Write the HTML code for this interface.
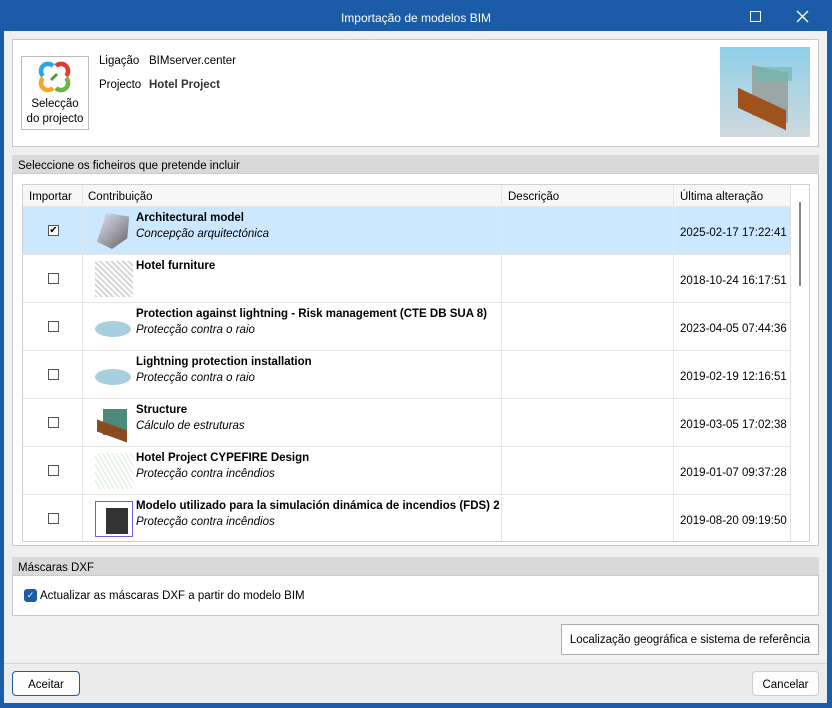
<!DOCTYPE html>
<html><head><meta charset="utf-8"><style>
*{box-sizing:border-box;margin:0;padding:0}
body{width:832px;height:708px;position:relative;overflow:hidden;background:#1a5ca8;font-family:"Liberation Sans",sans-serif;font-size:11.5px;color:#000}
.abs{position:absolute}
#win{left:4px;top:31px;width:823px;height:672px;background:#f0f0f0}
.title{left:0;top:0;width:832px;height:31px;color:#fff;font-size:12px;text-align:center;line-height:37px}
.panel{background:#fff;border:1px solid #c8c8c8}
.hdr{background:#d9d9d9;height:19px;line-height:22px;padding-left:6px}
.btn{background:#fdfdfd;border:1px solid #adadad;text-align:center}
.row{position:absolute;left:0;width:768px;height:48px;border-bottom:1px solid #e6e6e6}
.vl{position:absolute;top:0;width:1px;height:358px;background:#e6e6e6}
.cb{width:11px;height:11px;border:1px solid #555;background:#fff;position:absolute;left:25px;top:18px}
.nm{position:absolute;left:113px;top:5px;font-weight:bold;white-space:nowrap}
.sub{position:absolute;left:113px;top:21px;font-style:italic;white-space:nowrap}
.dt{position:absolute;left:657px;top:20px;white-space:nowrap}
.ic{position:absolute;left:72px;top:6px;width:38px;height:36px}
.th{position:absolute;top:6px}
</style></head><body>
<div class="abs title">Importação de modelos BIM</div>
<div class="abs" style="left:750px;top:11px;width:11px;height:11px;border:1.3px solid #fff"></div>
<svg class="abs" style="left:796px;top:10px" width="13" height="13"><path d="M1 1L12 12M12 1L1 12" stroke="#fff" stroke-width="1.4"/></svg>
<div class="abs" id="win"></div>

<div class="abs panel" style="left:12px;top:39px;width:807px;height:108px"></div>
<div class="abs btn" style="left:21px;top:56px;width:68px;height:74px;background:#fff;border-color:#bbb">
<svg width="36" height="34" style="margin-top:3px" viewBox="0 0 36 34"><path d="M6 16a7 7 0 0 1 10-10" stroke="#2aa9df" stroke-width="4.5" fill="none"/><path d="M19 6a7 7 0 0 1 10 10" stroke="#e03b3b" stroke-width="4.5" fill="none"/><path d="M6 18a7 7 0 0 0 10 10" stroke="#f3a926" stroke-width="4.5" fill="none"/><path d="M19 28a7 7 0 0 0 10-10" stroke="#6ab544" stroke-width="4.5" fill="none"/><path d="M14 20l6-6" stroke="#5a9a3a" stroke-width="3"/></svg>
<div style="line-height:15px;margin-top:0px">Selecção<br>do projecto</div></div>
<div class="abs" style="left:99px;top:55px">Ligação</div>
<div class="abs" style="left:149px;top:55px">BIMserver.center</div>
<div class="abs" style="left:99px;top:79px">Projecto</div>
<div class="abs" style="left:149px;top:79px;font-weight:bold;color:#333">Hotel Project</div>
<div class="abs" style="left:720px;top:47px;width:90px;height:90px;background:linear-gradient(#8fd0ea,#cfd8dc);overflow:hidden">
<div class="abs" style="left:32px;top:22px;width:36px;height:50px;background:#9aa7a5;transform:skewY(12deg)"></div>
<div class="abs" style="left:36px;top:20px;width:36px;height:14px;background:#6fb8b0;opacity:.7"></div>
<div class="abs" style="left:18px;top:52px;width:48px;height:20px;background:#a0521d;transform:skewY(25deg)"></div></div>

<div class="abs panel" style="left:12px;top:155px;width:807px;height:391px"><div class="hdr" style="margin:-1px;border-bottom:1px solid #ccc">Seleccione os ficheiros que pretende incluir</div></div>
<div class="abs" style="left:22px;top:184px;width:788px;height:358px;border:1px solid #d0d0d0;background:#fff;overflow:hidden">
<div class="abs" style="left:0;top:0;width:768px;height:22px;background:#f7f7f7;border-bottom:1px solid #e6e6e6"></div>
<div class="th" style="left:6px">Importar</div><div class="th" style="left:65px">Contribuição</div><div class="th" style="left:485px">Descrição</div><div class="th" style="left:657px">Última alteração</div>
<div class="row" style="top:22px;background:#cce8ff"><div class="cb" style="text-align:center;font-size:10px;line-height:9px">✔</div><div class="ic" style="background:linear-gradient(135deg,#ccd 20%,#777 80%);clip-path:polygon(30% 0,90% 10%,85% 70%,45% 100%,5% 80%)"></div><div class="nm">Architectural model</div><div class="sub">Concepção arquitectónica</div><div class="dt">2025-02-17 17:22:41</div></div>
<div class="row" style="top:70px"><div class="cb"></div><div class="ic" style="background:repeating-linear-gradient(45deg,#ccc 0 2px,#fff 2px 4px);opacity:.8"></div><div class="nm">Hotel furniture</div><div class="dt">2018-10-24 16:17:51</div></div>
<div class="row" style="top:118px"><div class="cb"></div><div class="ic"><div class="abs" style="left:0;top:12px;width:36px;height:16px;border-radius:50%;background:#a7cfe0"></div></div><div class="nm">Protection against lightning - Risk management (CTE DB SUA 8)</div><div class="sub">Protecção contra o raio</div><div class="dt">2023-04-05 07:44:36</div></div>
<div class="row" style="top:166px"><div class="cb"></div><div class="ic"><div class="abs" style="left:0;top:12px;width:36px;height:16px;border-radius:50%;background:#a7cfe0"></div></div><div class="nm">Lightning protection installation</div><div class="sub">Protecção contra o raio</div><div class="dt">2019-02-19 12:16:51</div></div>
<div class="row" style="top:214px"><div class="cb"></div><div class="ic"><div class="abs" style="left:8px;top:4px;width:24px;height:26px;background:#4e8a7c"></div><div class="abs" style="left:2px;top:20px;width:30px;height:12px;background:#8a4a22;transform:skewY(20deg)"></div></div><div class="nm">Structure</div><div class="sub">Cálculo de estruturas</div><div class="dt">2019-03-05 17:02:38</div></div>
<div class="row" style="top:262px"><div class="cb"></div><div class="ic" style="background:repeating-linear-gradient(60deg,#cfe8cf 0 1px,transparent 1px 4px);opacity:.8"></div><div class="nm">Hotel Project CYPEFIRE Design</div><div class="sub">Protecção contra incêndios</div><div class="dt">2019-01-07 09:37:28</div></div>
<div class="row" style="top:310px"><div class="cb"></div><div class="ic" style="border:1px solid #7a5adf"><div class="abs" style="left:10px;top:6px;width:22px;height:26px;background:#333"></div></div><div class="nm">Modelo utilizado para la simulación dinámica de incendios (FDS) 2</div><div class="sub">Protecção contra incêndios</div><div class="dt">2019-08-20 09:19:50</div></div>
<div class="vl" style="left:59px"></div><div class="vl" style="left:478px"></div><div class="vl" style="left:650px"></div><div class="vl" style="left:767px;background:#e0e0e0"></div>
<div class="abs" style="left:776px;top:17px;width:2px;height:84px;background:#888"></div>
</div>

<div class="abs panel" style="left:12px;top:557px;width:807px;height:59px"><div class="hdr" style="margin:-1px;border-bottom:1px solid #ccc">Máscaras DXF</div></div>
<div class="abs" style="left:24px;top:589px;width:13px;height:13px;border-radius:3px;background:#1a5ca8;color:#fff;font-size:9px;text-align:center;line-height:13px">✓</div>
<div class="abs" style="left:40px;top:590px">Actualizar as máscaras DXF a partir do modelo BIM</div>

<div class="abs btn" style="left:561px;top:624px;width:258px;height:31px;line-height:31px">Localização geográfica e sistema de referência</div>
<div class="abs" style="left:4px;top:663px;width:823px;height:1px;background:#d6d6d6"></div>
<div class="abs" style="left:4px;top:664px;width:823px;height:39px;background:#ececec"></div>
<div class="abs btn" style="left:12px;top:671px;width:68px;height:25px;line-height:26px;border-radius:4px;border-color:#1a5ca8;background:#fdfdfd">Aceitar</div>
<div class="abs btn" style="left:752px;top:671px;width:67px;height:25px;line-height:26px;border-radius:4px;border-color:#ccc">Cancelar</div>
</body></html>
